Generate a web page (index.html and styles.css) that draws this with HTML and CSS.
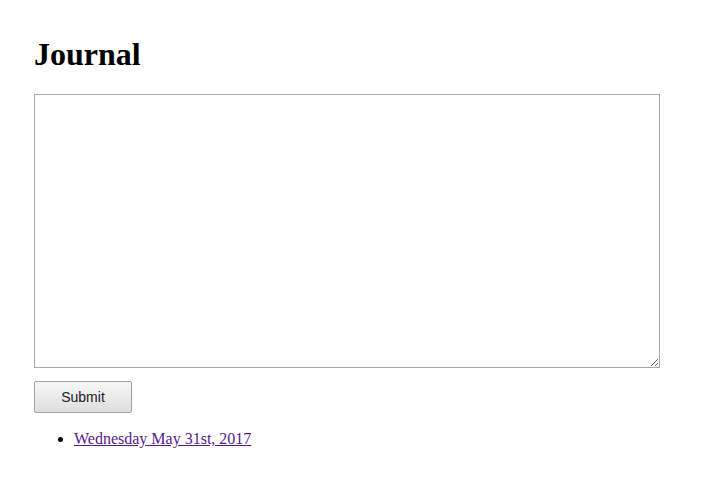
FILE: index.html
```html
<!DOCTYPE html>
<html lang="en">
<head>
    <meta charset="UTF-8">
    <title>Journal</title>
    <link rel="stylesheet" href="styles.css">
</head>
<body>
    <div class="page">
        <h1>Journal</h1>
        <form class="entry-form">
            <textarea class="entry-text"></textarea>
            <button type="button" class="submit-btn">Submit</button>
        </form>
        <ul class="entries">
            <li><a href="#" class="entry-link">Wednesday May 31st, 2017</a></li>
        </ul>
    </div>
</body>
</html>
```

FILE: styles.css
```css
body {
    margin: 0;
    background: #fff;
    font-family: "Liberation Serif", "Times New Roman", serif;
    color: #000;
}

.page {
    padding: 36px 34px 33px;
}

h1 {
    font-size: 32px;
    line-height: 37px;
    margin: 0 0 21px;
}

.entry-form {
    display: flex;
    flex-direction: column;
    align-items: flex-start;
    gap: 13px;
}

.entry-text {
    box-sizing: border-box;
    width: 626px;
    height: 274px;
    margin: 0;
    border: 1px solid #a9a9a9;
    resize: both;
}

.submit-btn {
    box-sizing: border-box;
    width: 98px;
    height: 32px;
    font-family: "Liberation Sans", Arial, sans-serif;
    font-size: 14px;
    color: #222;
    background: linear-gradient(#f7f7f7, #dedede);
    border: 1px solid #a3a3a3;
    border-radius: 2px;
}

.entries {
    margin: 16px 0 0;
    padding-left: 40px;
    font-size: 16px;
    line-height: 19px;
}

.entry-link {
    color: #551a8b;
}
```
